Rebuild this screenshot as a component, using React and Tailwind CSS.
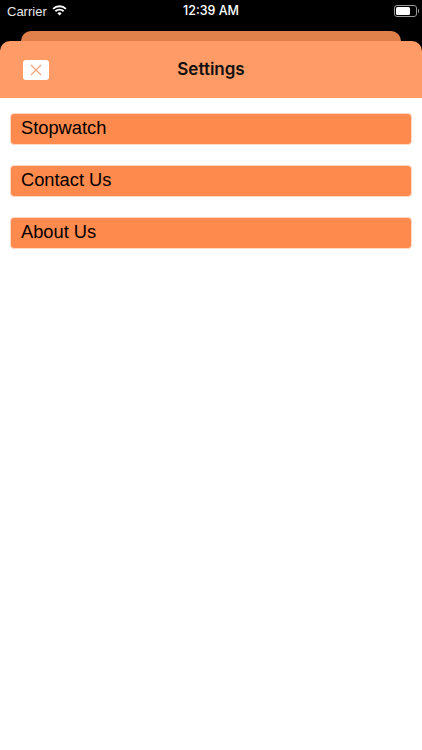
const items = ['Stopwatch', 'Contact Us', 'About Us'];

function Wifi() {
  return (
    <svg width="15" height="11" viewBox="0 0 16 12" className="ml-[5px] -mt-[2px]" fill="none">
      <path d="M1 4.2a10 10 0 0 1 14 0" stroke="white" strokeWidth="2" />
      <path d="M3.5 6.8a6.5 6.5 0 0 1 9 0" stroke="white" strokeWidth="2" />
      <path d="M8 11.5 5.6 9a3.4 3.4 0 0 1 4.8 0z" fill="white" />
    </svg>
  );
}

function Battery() {
  return (
    <div className="flex items-center">
      <div className="w-[23px] h-[12px] rounded-[3px] border border-[#9a9a9a] p-[1px]">
        <div className="w-[14px] h-full rounded-[1.5px] bg-white" />
      </div>
      <div className="w-[1px] h-[4px] ml-[1px] bg-[#9a9a9a] rounded-r-sm" />
    </div>
  );
}

export default function App() {
  return (
    <div className="w-[422px] h-[750px] bg-black overflow-hidden flex flex-col font-['Liberation_Sans',sans-serif]">
      <div className="h-[22px] flex items-center justify-between pl-[7px] pr-[3px] text-white text-[13px] shrink-0 relative">
        <div className="flex items-center text-[#e8e8e8] pt-[1px]">
          Carrier
          <Wifi />
        </div>
        <span className="font-['Inter',sans-serif] font-medium text-[12.5px] absolute left-0 right-0 text-center pt-[1px]">12:39 AM</span>
        <Battery />
      </div>
      <div className="h-[10px] mt-[9px] mx-[21px] bg-[#e0814c] rounded-t-[10px] shrink-0" />
      <div className="h-[57px] bg-[#ff9b66] rounded-t-[10px] flex items-center relative shrink-0 pl-[23px]">
        <button className="w-[26px] h-[20px] bg-white rounded-[3px] flex items-center justify-center">
          <svg width="12" height="12" viewBox="0 0 12 12" fill="none">
            <path d="M1 1l10 10M11 1L1 11" stroke="#f5a57c" strokeWidth="1.3" />
          </svg>
        </button>
        <span className="absolute left-0 right-0 text-center text-[17px] font-semibold text-[#111] font-['Inter',sans-serif] pointer-events-none">Settings</span>
      </div>
      <div className="flex-1 bg-white px-[10px] pt-[15px] flex flex-col gap-[20px]">
        {items.map((label) => (
          <div key={label} className="h-[32px] bg-[#ff8a4d] border border-[#ffd9c4] rounded-[4px] flex items-center pl-[10px] pb-[2px] text-[18.3px] text-black">
            {label}
          </div>
        ))}
      </div>
    </div>
  );
}
